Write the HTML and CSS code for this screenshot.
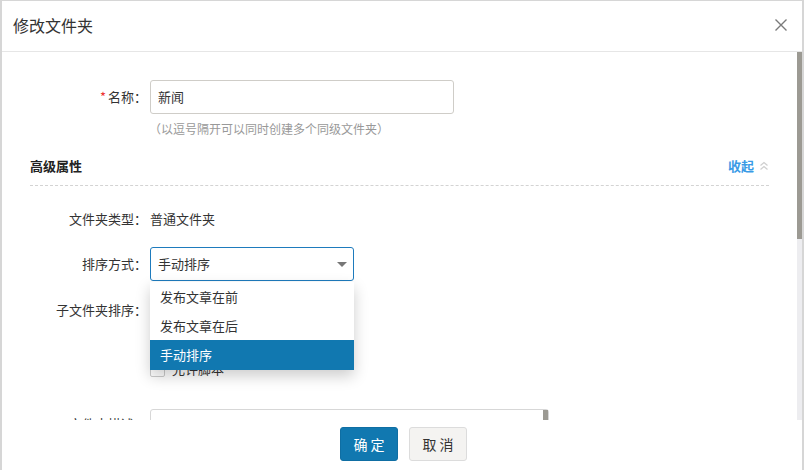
FILE: index.html
```html
<!DOCTYPE html>
<html lang="zh">
<head>
<meta charset="utf-8">
<title>修改文件夹</title>
<link rel="stylesheet" href="styles.css">
</head>
<body>
<div class="dialog">
  <div class="dlg-head">
    <span class="dlg-title">修改文件夹</span>
    <svg class="dlg-close" width="14" height="14" viewBox="0 0 14 14"><path d="M1.5 1.5 L12.5 12.5 M12.5 1.5 L1.5 12.5" stroke="#7a7a7a" stroke-width="1.4" fill="none"/></svg>
  </div>
  <div class="dlg-body">
    <div class="dlg-content">
      <div class="row row-name">
        <label class="lbl"><span class="req">*</span>名称：</label>
        <div class="input">新闻</div>
      </div>
      <div class="hint">（以逗号隔开可以同时创建多个同级文件夹）</div>
      <div class="section-head">
        <span class="section-title">高级属性</span>
        <span class="toggle">收起
          <svg width="10" height="10" viewBox="0 0 10 10"><path d="M1.5 4.5 L5 1.5 L8.5 4.5 M1.5 8.5 L5 5.5 L8.5 8.5" stroke="#cfcfcf" stroke-width="1.3" fill="none"/></svg>
        </span>
      </div>
      <div class="row row-text row-type">
        <span class="lbl">文件夹类型：</span>
        <span class="val">普通文件夹</span>
      </div>
      <div class="row row-select">
        <span class="lbl">排序方式：</span>
        <div class="select-wrap">
          <div class="select">手动排序<span class="caret"></span></div>
          <ul class="menu">
            <li class="opt">发布文章在前</li>
            <li class="opt">发布文章在后</li>
            <li class="opt selected">手动排序</li>
          </ul>
        </div>
      </div>
      <div class="row row-text row-sub">
        <span class="lbl">子文件夹排序：</span>
      </div>
      <div class="row row-text row-check">
        <span class="lbl"></span>
        <span class="check"><span class="box"></span><span class="check-text">允许脚本</span></span>
      </div>
      <div class="row row-desc">
        <span class="lbl">文件夹描述：</span>
        <div class="textarea"><span class="ta-thumb"></span></div>
      </div>
    </div>
    <div class="scrollbar"><div class="thumb"></div></div>
  </div>
  <div class="dlg-foot">
    <button class="btn btn-primary">确 定</button>
    <button class="btn btn-default">取 消</button>
  </div>
</div>
</body>
</html>
```

FILE: styles.css
```css
* { box-sizing: border-box; }
html, body { margin: 0; padding: 0; }
body {
  width: 804px;
  height: 470px;
  overflow: hidden;
  background: #d6d6d6;
  padding: 1px 2px 0 2px;
  font-family: "Noto Sans CJK SC", "Noto Sans", sans-serif;
  font-size: 13px;
  color: #333;
}
.dialog {
  width: 800px;
  height: 469px;
  background: #fff;
  display: flex;
  flex-direction: column;
}
.dlg-head {
  height: 51px;
  flex: none;
  border-bottom: 1px solid #e6e6e6;
  display: flex;
  align-items: center;
  justify-content: space-between;
  padding: 0 14px 0 11px;
}
.dlg-title {
  font-size: 16px;
  color: #333;
  line-height: 20px;
  margin-top: -2px;
}
.dlg-close { display: block; margin-top: -2px; }
.dlg-body {
  height: 368px;
  flex: none;
  display: flex;
  overflow: hidden;
}
.dlg-content {
  flex: 1;
  padding-top: 28px;
  overflow: hidden;
}
.scrollbar {
  width: 5px;
  flex: none;
  background: #ededf0;
}
.scrollbar .thumb {
  height: 187px;
  background: #9c9a93;
}
.row {
  display: flex;
  align-items: center;
}
.lbl {
  width: 145px;
  flex: none;
  text-align: right;
  margin-right: 3px;
  color: #333;
  line-height: 20px;
}
.req { color: #e33; margin-right: 2px; }
.row-name { height: 34px; }
.input {
  width: 304px;
  height: 34px;
  border: 1px solid #cfcdc8;
  border-radius: 3px;
  padding: 0 7px;
  line-height: 32px;
  font-size: 13px;
  color: #333;
}
.hint {
  margin-top: 7px;
  padding-left: 147px;
  font-size: 12px;
  line-height: 16px;
  color: #999;
}
.section-head {
  margin: 19px 28px 0 28px;
  display: flex;
  justify-content: space-between;
  align-items: center;
  line-height: 20px;
  padding-bottom: 9px;
  border-bottom: 1px dashed #d3d3d3;
}
.section-title { font-weight: bold; color: #222; }
.toggle {
  color: #3a9be6;
  font-weight: bold;
  display: flex;
  align-items: center;
  gap: 5px;
}
.toggle svg { display: block; }
.row-text { line-height: 20px; }
.row-type { margin-top: 23px; }
.val { color: #333; }
.row-select { margin-top: 18px; align-items: flex-start; }
.row-select .lbl { line-height: 34px; }
.select-wrap { position: relative; width: 204px; }
.select {
  height: 34px;
  border: 1px solid #1e7bbd;
  border-radius: 3px;
  padding: 0 7px;
  line-height: 32px;
  position: relative;
}
.caret {
  position: absolute;
  right: 6px;
  top: 14px;
  width: 0;
  height: 0;
  border-left: 5px solid transparent;
  border-right: 5px solid transparent;
  border-top: 5px solid #777;
}
.menu {
  position: absolute;
  left: 0;
  top: 35px;
  width: 204px;
  margin: 0;
  padding: 0;
  list-style: none;
  background: #fff;
  box-shadow: 0 6px 14px rgba(0,0,0,0.2);
  z-index: 5;
}
.opt {
  height: 29px;
  line-height: 29px;
  padding-left: 10px;
  color: #333;
}
.opt.selected {
  height: 30px;
  line-height: 30px;
  background: #1178b0;
  color: #fff;
}
.row-sub { margin-top: 19px; }
.row-check { margin-top: 39px; height: 20px; }
.check { display: flex; align-items: center; gap: 7px; }
.box {
  width: 15px;
  height: 15px;
  border: 1px solid #ccc;
  border-radius: 2px;
  display: inline-block;
}
.row-desc { margin-top: 30px; align-items: flex-start; }
.row-desc .lbl { margin-top: 5px; }
.textarea {
  width: 399px;
  height: 60px;
  border: 1px solid #d7d7d7;
  border-radius: 3px;
  position: relative;
}
.ta-thumb {
  position: absolute;
  right: 0;
  top: 0;
  width: 5px;
  height: 14px;
  background: #9c9a93;
}
.dlg-foot {
  flex: 1;
  display: flex;
  justify-content: center;
  align-items: flex-start;
  gap: 11px;
  padding-top: 7px;
  padding-left: 3px;
}
.btn {
  width: 58px;
  height: 34px;
  border-radius: 3px;
  font-family: inherit;
  font-size: 14px;
  cursor: pointer;
  padding: 0;
}
.btn-primary {
  background: #1178b0;
  border: 1px solid #0f6ea3;
  color: #fff;
}
.btn-default {
  background: #f4f3f1;
  border: 1px solid #dcdcdc;
  color: #333;
}
```
